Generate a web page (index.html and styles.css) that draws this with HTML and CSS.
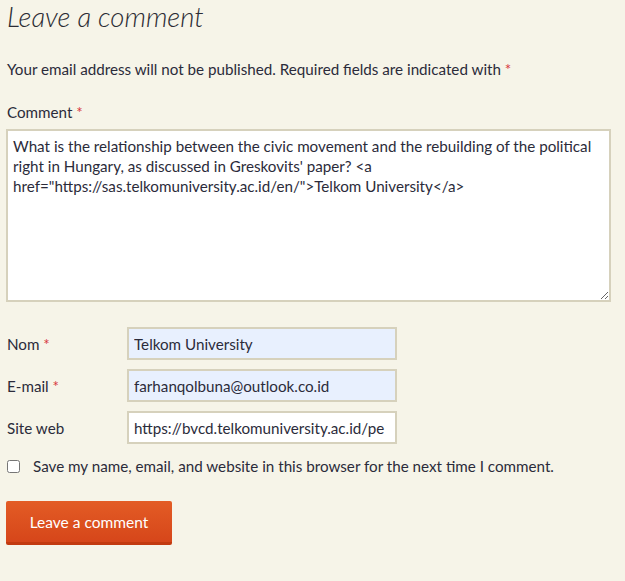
FILE: index.html
```html
<!DOCTYPE html>
<html lang="en">
<head>
<meta charset="utf-8">
<link rel="stylesheet" href="styles.css">
</head>
<body>
<div class="respond">
  <h3 class="title">Leave a comment</h3>
  <p class="notes">Your email address will not be published. Required fields are indicated with <span class="req">*</span></p>
  <div class="comment-field">
    <label class="comment-label">Comment <span class="req">*</span></label>
    <textarea class="comment-box">What is the relationship between the civic movement and the rebuilding of the political right in Hungary, as discussed in Greskovits' paper? &lt;a href="https://sas.telkomuniversity.ac.id/en/"&gt;Telkom University&lt;/a&gt;</textarea>
  </div>
  <div class="fields">
    <label class="field-label">Nom <span class="req">*</span></label>
    <input class="field auto" type="text" value="Telkom University">
    <label class="field-label">E-mail <span class="req">*</span></label>
    <input class="field auto" type="text" value="farhanqolbuna@outlook.co.id">
    <label class="field-label">Site web</label>
    <input class="field" type="text" value="https://bvcd.telkomuniversity.ac.id/pe">
  </div>
  <div class="cookies">
    <input class="check" type="checkbox">
    <span class="cookies-text">Save my name, email, and website in this browser for the next time I comment.</span>
  </div>
  <button class="submit">Leave a comment</button>
</div>
</body>
</html>
```
FILE: styles.css
```css
html, body {
  margin: 0;
  padding: 0;
  background: #f6f4e8;
}
body {
  font-family: "Lato", "Open Sans", sans-serif;
  color: #2b2b3a;
  font-size: 15.2px;
}
.respond {
  padding: 0 6px;
}
.title {
  margin: 0;
  padding-top: 2px;
  font-size: 27.5px;
  font-weight: 300;
  font-style: italic;
  color: #2c2c34;
  line-height: 30px;
  padding-left: 1px;
}
.notes {
  margin: 25px 0 0 1px;
  line-height: 24px;
}
.req {
  color: #d6363c;
}
.comment-field {
  margin-top: 19px;
}
.comment-label {
  display: block;
  margin-left: 1px;
  line-height: 24px;
}
.comment-box {
  display: block;
  box-sizing: border-box;
  margin-top: 5px;
  width: 605px;
  height: 173px;
  border: 2px solid #d6d1bc;
  background: #fff;
  font-family: inherit;
  font-size: 15.2px;
  line-height: 20px;
  color: #2b2b3a;
  padding: 5px 5px;
  resize: vertical;
}
.fields {
  display: grid;
  grid-template-columns: 121px 270px;
  row-gap: 9px;
  align-items: center;
  margin-top: 25px;
}
.field-label {
  padding-left: 1px;
}
.field {
  box-sizing: border-box;
  width: 270px;
  height: 33px;
  border: 2px solid #d6d1bc;
  background: #fff;
  font-family: inherit;
  font-size: 15.2px;
  color: #2b2b3a;
  padding: 0 5px;
}
.field.auto {
  background: #e8f0fe;
}
.cookies {
  display: flex;
  align-items: center;
  margin-top: 12px;
  line-height: 20px;
}
.check {
  margin: 0 13px 0 1px;
  width: 13px;
  height: 13px;
}
.submit {
  margin-top: 25px;
  width: 166px;
  height: 44px;
  border: 0;
  border-bottom: 3px solid #c23a10;
  border-radius: 2px;
  background: linear-gradient(#e35c25, #d6461a);
  color: #fff;
  font-family: inherit;
  font-size: 15.5px;
  padding: 0;
  margin-left: 0;
}
```
